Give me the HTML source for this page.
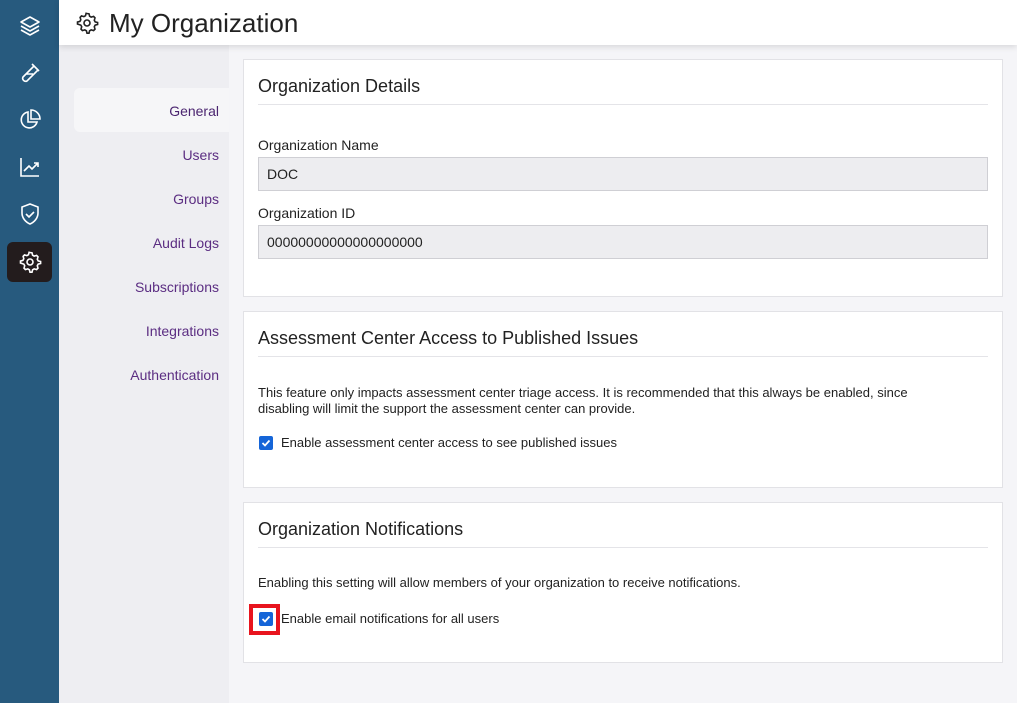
<!DOCTYPE html><html><head><style>
*{margin:0;padding:0;box-sizing:border-box}
body{width:1017px;height:703px;overflow:hidden;font-family:"Liberation Sans",sans-serif;background:#f5f5f8;position:relative;color:#222}
.sb{position:absolute;left:0;top:0;width:59px;height:703px;background:#275a7e}
.ic{position:absolute;left:7px;width:45px;height:40px;display:flex;align-items:center;justify-content:center}
.hd{position:absolute;left:59px;top:0;right:0;height:45px;background:#fff;box-shadow:0 2px 6px rgba(0,0,0,.12);z-index:2}
.hd span{position:absolute;left:50px;top:8px;font-size:26px;color:#222}
.nav{position:absolute;left:59px;top:45px;width:170px;height:658px;background:#eeeef2}
.nav div{position:absolute;right:10px;font-size:14px;color:#5b2d82;text-align:right}
.gen{position:absolute;left:74px;top:88px;width:155px;height:44px;background:#f6f6f8;border-radius:6px 0 0 6px}
.card{position:absolute;left:243px;width:760px;background:#fff;border:1px solid #e2e2e6}
.card h2{font-weight:normal;font-size:18px;margin:16px 14px 0;padding-bottom:7px;border-bottom:1px solid #e4e4e8;color:#222}
.lbl{position:absolute;left:14px;font-size:14px}
.inp{position:absolute;left:14px;width:730px;height:34px;background:#ededf0;border:1px solid #cfcfd4;font-size:14px;padding:8px 8px}
.p{position:absolute;left:14px;font-size:13px;line-height:16px;width:690px}
.cb{position:absolute;left:15px;width:14px;height:14px;background:#1565d8;border-radius:2px}
.cb svg{position:absolute;left:1px;top:1px}
</style></head><body>
<div class="sb">
<div class="ic" style="top:6px"><svg width="24" height="24" viewBox="0 0 24 24" fill="none" stroke="#fff" stroke-width="1.6" stroke-linejoin="round"><path d="M12 3 3 8l9 5 9-5z"/><path d="M3 12l9 5 9-5"/><path d="M3 16l9 5 9-5"/></svg></div>
<div class="ic" style="top:53px"><svg width="24" height="24" viewBox="0 0 24 24" fill="none" stroke="#fff" stroke-width="1.6"><path d="M14 3l7 7M16 5 5 16a3 3 0 0 0 4 4L20 9M8 13h7"/></svg></div>
<div class="ic" style="top:100px"><svg width="24" height="24" viewBox="0 0 24 24" fill="none" stroke="#fff" stroke-width="1.6"><path d="M10 4a8 8 0 1 0 9 10h-9z"/><path d="M13 2v9h9a9 9 0 0 0-9-9z"/></svg></div>
<div class="ic" style="top:147px"><svg width="24" height="24" viewBox="0 0 24 24" fill="none" stroke="#fff" stroke-width="1.6"><path d="M3 3v18h18"/><path d="M6 16l5-5 3 3 6-6M16 8h4v4"/></svg></div>
<div class="ic" style="top:194px"><svg width="24" height="24" viewBox="0 0 24 24" fill="none" stroke="#fff" stroke-width="1.6"><path d="M12 2 4 5v6c0 5 3.5 9 8 11 4.5-2 8-6 8-11V5z"/><path d="M8 12l3 3 5-5"/></svg></div>
<div class="ic" style="top:242px;background:#231c1d;border-radius:6px"><svg width="24" height="24" viewBox="0 0 24 24" fill="none" stroke="#fff" stroke-width="1.6"><circle cx="12" cy="12" r="3"/><path d="M12 2.5l2 .3.6 2.4 1.6.9 2.4-.7 1.4 1.5-.7 2.4.9 1.6 2.4.6v2l-2.4.6-.9 1.6.7 2.4-1.4 1.5-2.4-.7-1.6.9-.6 2.4h-2l-.6-2.4-1.6-.9-2.4.7-1.4-1.5.7-2.4-.9-1.6L2.5 13v-2l2.4-.6.9-1.6-.7-2.4 1.4-1.5 2.4.7 1.6-.9.6-2.4z"/></svg></div>
</div>
<div class="hd"><svg style="position:absolute;left:16px;top:11px" width="24" height="24" viewBox="0 0 24 24" fill="none" stroke="#222" stroke-width="1.6"><circle cx="12" cy="12" r="3"/><path d="M12 2.5l2 .3.6 2.4 1.6.9 2.4-.7 1.4 1.5-.7 2.4.9 1.6 2.4.6v2l-2.4.6-.9 1.6.7 2.4-1.4 1.5-2.4-.7-1.6.9-.6 2.4h-2l-.6-2.4-1.6-.9-2.4.7-1.4-1.5.7-2.4-.9-1.6L2.5 13v-2l2.4-.6.9-1.6-.7-2.4 1.4-1.5 2.4.7 1.6-.9.6-2.4z"/></svg><span>My Organization</span></div>
<div class="nav">
<div style="top:102px">Users</div><div style="top:146px">Groups</div><div style="top:190px">Audit Logs</div><div style="top:234px">Subscriptions</div><div style="top:278px">Integrations</div><div style="top:322px">Authentication</div>
</div>
<div class="gen"></div>
<div style="position:absolute;right:798px;top:103px;font-size:14px;color:#4b2570">General</div>
<div class="card" style="top:59px;height:238px"><h2>Organization Details</h2>
<div class="lbl" style="top:77px">Organization Name</div><div class="inp" style="top:97px">DOC</div>
<div class="lbl" style="top:145px">Organization ID</div><div class="inp" style="top:165px">00000000000000000000</div></div>
<div class="card" style="top:311px;height:177px"><h2>Assessment Center Access to Published Issues</h2>
<div class="p" style="top:73px">This feature only impacts assessment center triage access. It is recommended that this always be enabled, since disabling will limit the support the assessment center can provide.</div>
<div class="cb" style="top:124px"><svg width="12" height="12" viewBox="0 0 12 12"><path d="M2.5 6l2.5 2.5 4.5-5" stroke="#fff" stroke-width="1.8" fill="none"/></svg></div>
<div class="p" style="top:123px;left:37px">Enable assessment center access to see published issues</div></div>
<div class="card" style="top:502px;height:161px"><h2>Organization Notifications</h2>
<div class="p" style="top:72px">Enabling this setting will allow members of your organization to receive notifications.</div>
<div style="position:absolute;left:5px;top:101px;width:31px;height:31px;border:4px solid #e8141e"></div>
<div class="cb" style="top:109px"><svg width="12" height="12" viewBox="0 0 12 12"><path d="M2.5 6l2.5 2.5 4.5-5" stroke="#fff" stroke-width="1.8" fill="none"/></svg></div>
<div class="p" style="top:108px;left:37px">Enable email notifications for all users</div></div>
</body></html>
